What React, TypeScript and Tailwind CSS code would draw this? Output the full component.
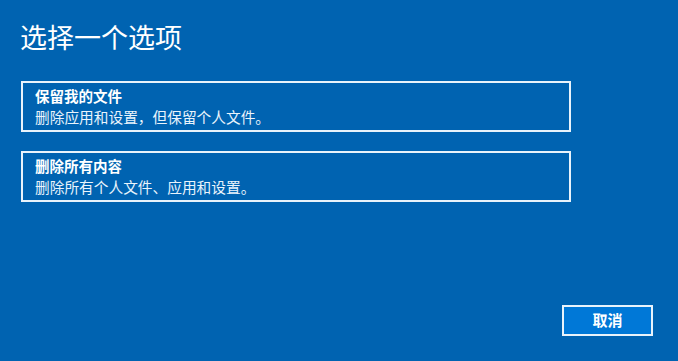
import React from "react";

const font = { fontFamily: '"Noto Sans CJK SC", "Noto Sans", sans-serif' };

function Option({ title, desc }: { title: string; desc: string }) {
  return (
    <div className="w-[550px] h-[51px] border-2 border-[#e9f3fb] px-[12px] flex flex-col justify-center">
      <div className="text-[14.5px] font-bold leading-[20px] text-white">{title}</div>
      <div className="text-[14.7px] leading-[21px] text-[#eaf4fc]">{desc}</div>
    </div>
  );
}

export default function App() {
  return (
    <div className="w-[678px] h-[361px] bg-[#0063b1] flex flex-col pl-[21px] overflow-hidden" style={font}>
      <div className="mt-[19px] text-[27px] leading-[36px] text-white -ml-[1px]">选择一个选项</div>
      <div className="mt-[26px] flex flex-col gap-[19px]">
        <Option title="保留我的文件" desc="删除应用和设置，但保留个人文件。" />
        <Option title="删除所有内容" desc="删除所有个人文件、应用和设置。" />
      </div>
      <div className="mt-auto mb-[25px] flex justify-end pr-[25px]">
        <button className="w-[91px] h-[31px] border-2 border-[#e9f3fb] bg-[#0078d7] text-white text-[15px] font-bold flex items-center justify-center">
          取消
        </button>
      </div>
    </div>
  );
}
